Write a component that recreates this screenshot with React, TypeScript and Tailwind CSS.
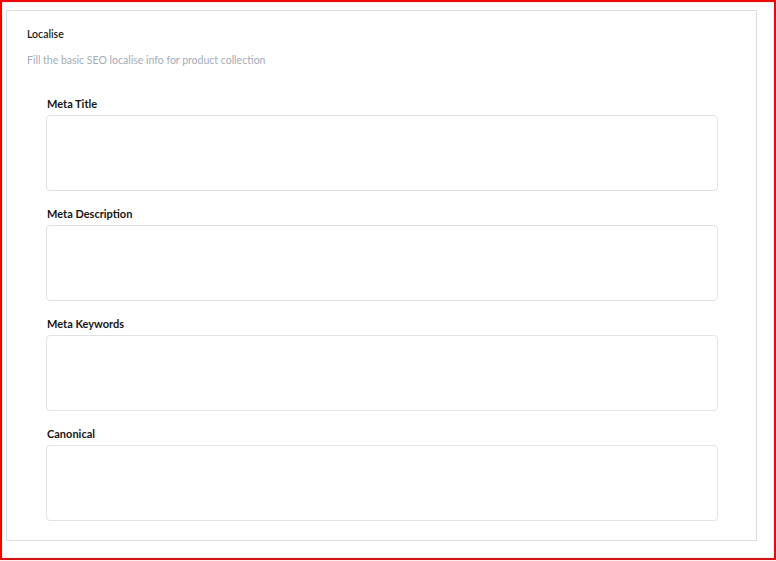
import React from "react";

const fields = ["Meta Title", "Meta Description", "Meta Keywords", "Canonical"];

export default function App() {
  return (
    <div
      className="w-[776px] h-[560px] border-2 border-[#ff0000] bg-white pl-[4px] pt-[8px] pr-[17px] pb-[17px]"
      style={{ fontFamily: "Lato, 'Noto Sans', sans-serif" }}
    >
      <div className="h-full border border-[#dddddd] pt-[16px] pb-[19px] px-[20px]">
        <div className="text-[10.5px] leading-[14px] font-semibold text-[#1c1c1c]">Localise</div>
        <div className="mt-[12px] text-[10.5px] leading-[14px] text-[#a3adba]">
          Fill the basic SEO localise info for product collection
        </div>
        <div className="mt-[30px] pl-[19px] pr-[18px] flex flex-col gap-[16px]">
          {fields.map((f) => (
            <div key={f} className="flex flex-col">
              <label className="text-[11px] leading-[14px] font-bold text-[#161616] pl-[1px]">{f}</label>
              <textarea className="mt-[4px] h-[76px] w-full resize-none rounded-[4px] border border-[#e3e3e3] bg-white outline-none" />
            </div>
          ))}
        </div>
      </div>
    </div>
  );
}
